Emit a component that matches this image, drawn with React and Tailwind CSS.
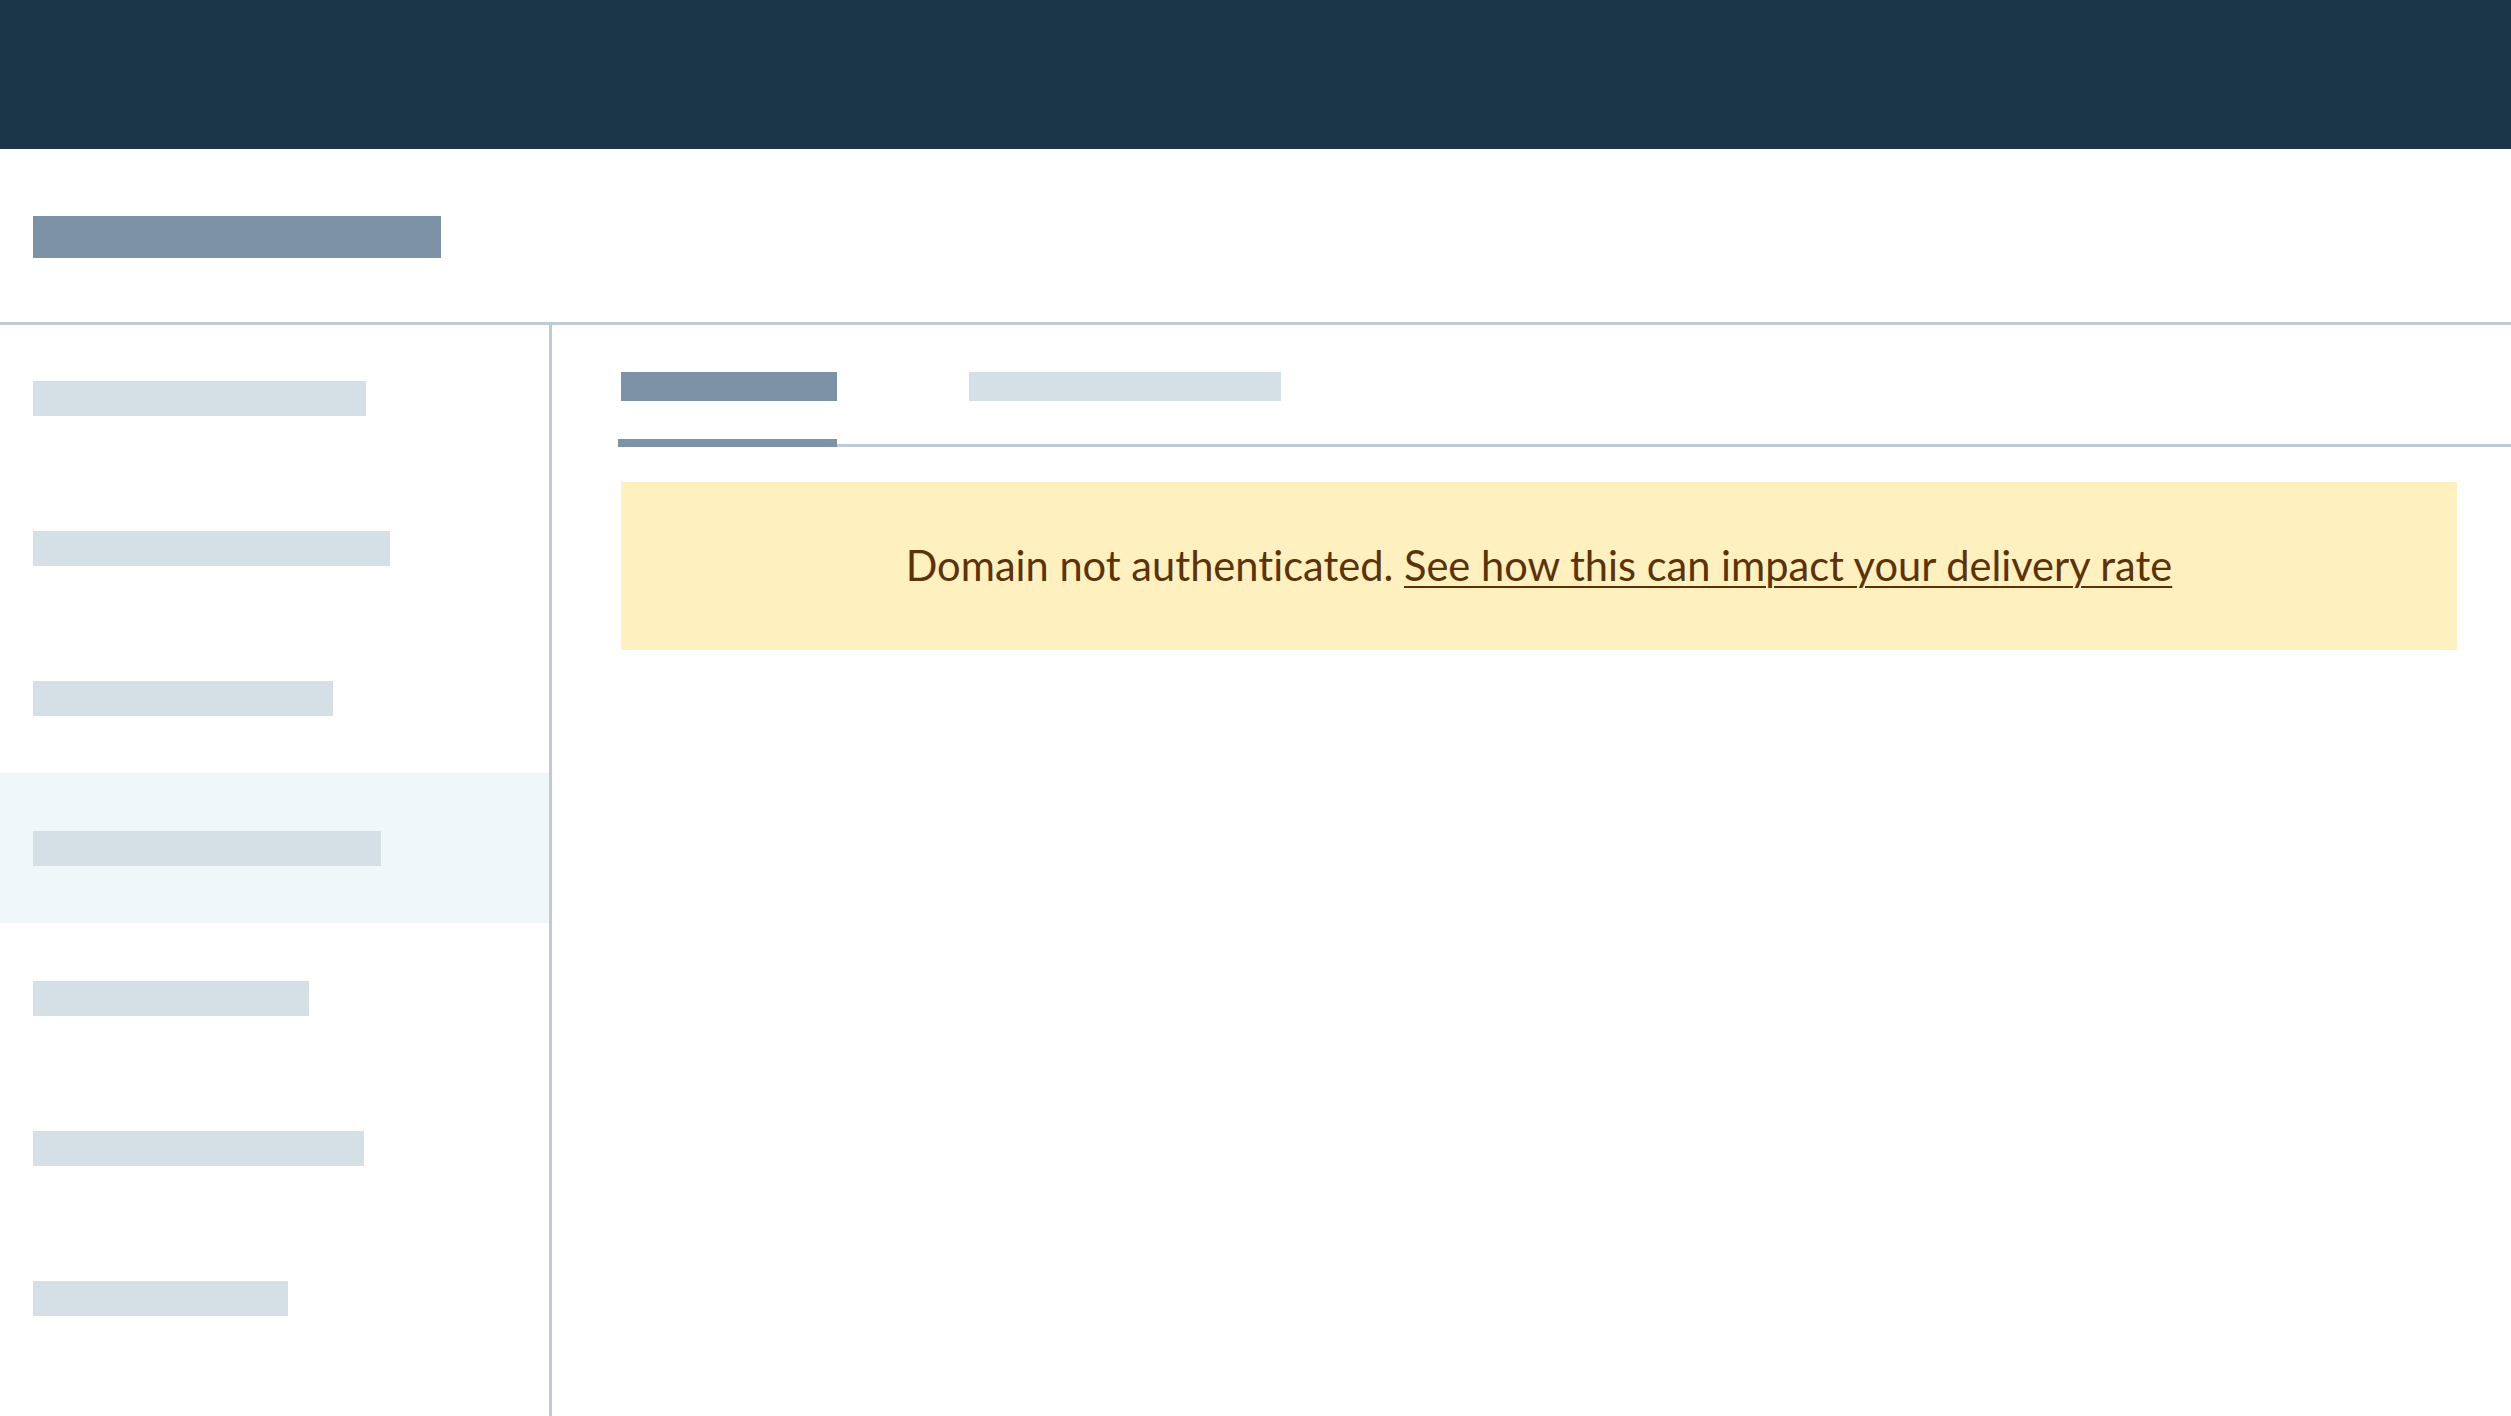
import React from "react";

// Sidebar placeholder bars (widths in px)
const navItems = [333, 357, 300, 348, 276, 331, 255];

const NavRow = ({ width, active }) => (
  <div
    className={`h-[150px] flex items-center pl-[33px] ${
      active ? "bg-[#eff7f9]" : ""
    }`}
  >
    <div className="h-[35px] bg-[#d5e0e6]" style={{ width }} />
  </div>
);

const App = () => {
  return (
    <div className="w-[2511px] h-[1416px] overflow-hidden bg-white font-['Lato','Liberation_Sans',sans-serif] flex flex-col">
      {/* Top navigation bar */}
      <div className="h-[149px] shrink-0 bg-[#1b3549]" />

      {/* Page title */}
      <div className="h-[176px] shrink-0 pt-[67px] pl-[33px] border-b-[3px] border-[#bccbd6]">
        <div className="w-[408px] h-[42px] bg-[#7b92a7]" />
      </div>

      <div className="flex flex-1 min-h-0">
        {/* Sidebar */}
        <div className="w-[552px] shrink-0 border-r-[3px] border-[#bccbd6] flex flex-col -mt-[2px]">
          {navItems.map((w, i) => (
            <NavRow key={i} width={w} active={i === 3} />
          ))}
        </div>

        {/* Main content */}
        <div className="flex-1 pl-[66px] pt-[47px]">
          <div className="flex items-start gap-[132px] border-b-[3px] border-[#bccbd6] h-[75px]">
            <div className="relative w-[219px] h-full pl-[3px]">
              <div className="w-[216px] h-[29px] bg-[#7b92a7]" />
              <span className="absolute left-0 right-0 bottom-[-3px] h-[8px] bg-[#7b92a7]" />
            </div>
            <div className="w-[312px] h-[29px] bg-[#d5e0e6]" />
          </div>

          <div className="mt-[35px] ml-[3px] mr-[54px] h-[168px] bg-[#fef1bf] flex items-center justify-center">
            <p className="text-[41.6px] leading-none text-[#5c3308] [font-variant-ligatures:none]">
              Domain not authenticated.{" "}
              <a href="#" className="underline decoration-2 underline-offset-[5px]">
                See how this can impact your delivery rate
              </a>
            </p>
          </div>
        </div>
      </div>
    </div>
  );
};

export default App;
